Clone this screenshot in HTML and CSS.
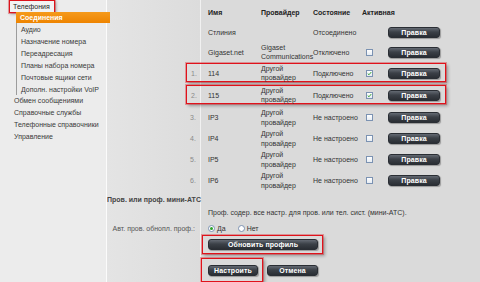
FILE: index.html
```html
<!DOCTYPE html>
<html lang="ru">
<head>
<meta charset="utf-8">
<title>Телефония — Соединения</title>
<link rel="stylesheet" href="styles.css">
</head>
<body>
<div class="page">
  <nav class="side">
    <div class="top-hl">Телефония</div>
    <div class="sub">
      <div class="sub-item active">Соединения</div>
      <div class="sub-item">Аудио</div>
      <div class="sub-item">Назначение номера</div>
      <div class="sub-item">Переадресация</div>
      <div class="sub-item">Планы набора номера</div>
      <div class="sub-item">Почтовые ящики сети</div>
      <div class="sub-item">Дополн. настройки VoIP</div>
    </div>
    <div class="top-item">Обмен сообщениями</div>
    <div class="top-item">Справочные службы</div>
    <div class="top-item">Телефонные справочники</div>
    <div class="top-item">Управление</div>
  </nav>
  <main class="main">
    <div class="tbl">
      <div class="row head">
        <span></span><span class="name">Имя</span><span class="prov">Провайдер</span><span class="state">Состояние</span><span class="act">Активная</span><span></span>
      </div>
      <div class="row">
        <span></span><span class="name">Стлиния</span><span class="prov"></span><span class="state">Отсоединено</span><span class="act"></span><span class="btn">Правка</span>
      </div>
      <div class="row">
        <span></span><span class="name">Gigaset.net</span><span class="prov two">Gigaset<br>Communications</span><span class="state">Отключено</span><span class="act"><span class="cb"></span></span><span class="btn">Правка</span>
      </div>
      <div class="row hl">
        <span class="num">1.</span><span class="name">114</span><span class="prov two">Другой<br>провайдер</span><span class="state">Подключено</span><span class="act"><span class="cb on"><svg viewBox="0 0 7 7" width="5" height="5"><path d="M1 3.6 L2.8 5.3 L6 1.4" fill="none" stroke="#2aa02a" stroke-width="1.3"/></svg></span></span><span class="btn">Правка</span>
      </div>
      <div class="row hl">
        <span class="num">2.</span><span class="name">115</span><span class="prov two">Другой<br>провайдер</span><span class="state">Подключено</span><span class="act"><span class="cb on"><svg viewBox="0 0 7 7" width="5" height="5"><path d="M1 3.6 L2.8 5.3 L6 1.4" fill="none" stroke="#2aa02a" stroke-width="1.3"/></svg></span></span><span class="btn">Правка</span>
      </div>
      <div class="row ip">
        <span class="num">3.</span><span class="name">IP3</span><span class="prov two">Другой<br>провайдер</span><span class="state">Не настроено</span><span class="act"><span class="cb"></span></span><span class="btn">Правка</span>
      </div>
      <div class="row ip">
        <span class="num">4.</span><span class="name">IP4</span><span class="prov two">Другой<br>провайдер</span><span class="state">Не настроено</span><span class="act"><span class="cb"></span></span><span class="btn">Правка</span>
      </div>
      <div class="row ip">
        <span class="num">5.</span><span class="name">IP5</span><span class="prov two">Другой<br>провайдер</span><span class="state">Не настроено</span><span class="act"><span class="cb"></span></span><span class="btn">Правка</span>
      </div>
      <div class="row ip">
        <span class="num">6.</span><span class="name">IP6</span><span class="prov two">Другой<br>провайдер</span><span class="state">Не настроено</span><span class="act"><span class="cb"></span></span><span class="btn">Правка</span>
      </div>
    </div>

    <div class="frow section">
      <div class="lbl bold">Пров. или проф. мини-АТС</div><div></div>
    </div>
    <div class="frow desc">
      <div></div><div class="val">Проф. содер. все настр. для пров. или тел. сист. (мини-АТС).</div>
    </div>
    <div class="frow radios">
      <div class="lbl">Авт. пров. обнопл. проф.:</div>
      <div class="val radio-group">
        <span class="radio on"></span><span class="rtext">Да</span>
        <span class="radio"></span><span class="rtext">Нет</span>
      </div>
    </div>
    <div class="frow update">
      <div></div>
      <div><div class="box upd-box"><span class="btn wide">Обновить профиль</span></div></div>
    </div>
    <div class="frow actions">
      <div></div>
      <div class="act-group">
        <div class="box set-box"><span class="btn mid">Настроить</span></div>
        <span class="btn cancel">Отмена</span>
      </div>
    </div>
  </main>
</div>
</body>
</html>
```
FILE: styles.css
```css
* { box-sizing: border-box; margin: 0; padding: 0; }
html, body { width: 480px; height: 282px; overflow: hidden; }
body {
  font-family: "Liberation Sans", Arial, sans-serif;
  font-size: 7px;
  color: #333;
  background: #dadada;
}
.page { display: flex; height: 282px; }

/* sidebar */
.side {
  width: 107px;
  flex: none;
  background: #ececec;
  border-right: 1px solid #fbfbfb;
  position: relative;
  z-index: 1;
  color: #3a3a3a;
}
.top-hl {
  margin-left: 9px;
  width: 46px;
  height: 13px;
  padding-left: 3px;
  line-height: 12px;
  background: #f3f3f3;
  border: 1px solid #dc141c;
  box-shadow: 0 0 0 1px rgba(220,20,28,.35), 1px 1px 3px rgba(0,0,0,.35);
  color: #222;
}
.sub {
  margin-left: 16px;
  border-left: 1px solid #9c9c9c;
  height: 83px;
}
.sub-item {
  height: 12px;
  line-height: 12px;
  padding-left: 4px;
}
.sub-item.active {
  height: 11px;
  line-height: 11px;
  margin-top: -1px;
  margin-bottom: 1px;
  margin-left: -1px;
  width: 94px;
  padding-left: 4px;
  background: linear-gradient(#f59a1c, #ee8400);
  color: #fff;
  font-weight: bold;
}
.top-item {
  height: 12px;
  line-height: 12px;
  padding-left: 14px;
}

/* main */
.main {
  flex: 1;
  background: linear-gradient(to right, #e4e4e4 0, #dcdcdc 93px, #f1f1f1 93px, #f1f1f1 94px, #dadada 94px);
}
.tbl { padding-top: 2px; }
.row {
  display: grid;
  grid-template-columns: 15px 59px 52px 49px 27px 52px;
  width: 260px;
  height: 20px;
  margin-left: 79px;
  align-items: center;
  white-space: nowrap;
}
.row.head { font-weight: bold; color: #222; }
.row.hl {
  grid-template-columns: 14px 59px 52px 49px 27px 52px;
  height: 19px;
  margin: 1px 0 3px 79px;
  border: 1px solid #e0121b;
  box-shadow: 0 0 0 1px rgba(220,20,28,.35), 2px 2px 3px rgba(0,0,0,.3);
}
.row.hl .prov.two { line-height: 9px; }
.row.ip { height: 21px; }
.num { padding-left: 4px; color: #8a8a8a; }
.name { padding-left: 7px; }
.prov { padding-left: 1px; }
.prov.two { line-height: 9.5px; }
.state { padding-left: 1px; }
.act { padding-left: 1px; display: flex; align-items: center; }
.cb {
  width: 7px;
  height: 7px;
  margin-left: 4px;
  border: 1px solid #7b92b2;
  background: linear-gradient(#ffffff, #e6ecf3);
  display: flex;
  align-items: center;
  justify-content: center;
}

/* buttons */
.btn {
  display: flex;
  align-items: center;
  justify-content: center;
  width: 52px;
  height: 11px;
  border-radius: 3px;
  background: linear-gradient(#646a73, #3b4047 45%, #2a2e34);
  border: 1px solid #2a2e34;
  box-shadow: 1px 1px 1px rgba(0,0,0,.3);
  color: #fff;
  font-weight: bold;
  font-size: 7px;
  letter-spacing: .1px;
}
.btn.wide { width: 110px; }
.btn.mid { width: 50px; }
.btn.cancel { width: 51px; margin-left: 4px; margin-top: 7px; }

/* form */
.frow {
  display: grid;
  grid-template-columns: 94px 1fr;
  align-items: center;
  white-space: nowrap;
}
.lbl { text-align: right; padding-right: 6px; color: #555; }
.lbl.bold { font-weight: bold; color: #444; }
.val { padding-left: 7px; }
.section { margin-top: 2px; height: 13px; }
.desc { height: 13px; }
.radios { margin-top: 2px; height: 14px; }
.radio-group { display: flex; align-items: center; }
.radio {
  width: 7px;
  height: 7px;
  border-radius: 50%;
  border: 1px solid #7b92b2;
  background: #fff;
  display: flex;
  align-items: center;
  justify-content: center;
}
.radio.on::after {
  content: "";
  width: 3px;
  height: 3px;
  border-radius: 50%;
  background: #2aa02a;
}
.rtext { margin-left: 2px; margin-right: 12px; }
.box {
  border: 1px solid #e0121b;
  box-shadow: 0 0 0 1px rgba(220,20,28,.35), 2px 2px 3px rgba(0,0,0,.3);
}
.update { height: 19px; }
.upd-box {
  margin-left: 1px;
  width: 121px;
  height: 19px;
  padding: 3px 4px 3px 5px;
}
.actions { margin-top: 4px; align-items: start; }
.act-group { display: flex; align-items: flex-start; }
.set-box {
  width: 62px;
  height: 24px;
  padding: 6px 4px 4px 6px;
}
```
